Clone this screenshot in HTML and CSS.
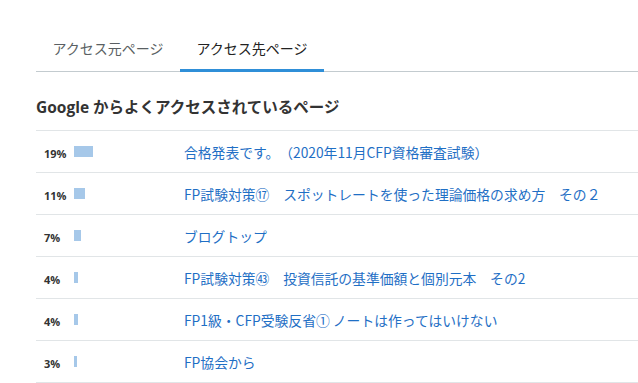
FILE: index.html
```html
<!DOCTYPE html>
<html lang="ja">
<head>
<meta charset="utf-8">
<link rel="stylesheet" href="styles.css">
</head>
<body>
<div class="page">
  <div class="tabs">
    <div class="tab">アクセス元ページ</div>
    <div class="tab active">アクセス先ページ</div>
  </div>
  <h2 class="heading">Google からよくアクセスされているページ</h2>
  <ul class="rows">
    <li class="row"><span class="pct">19%</span><span class="barcell"><span class="bar" style="width:19px"></span></span><a class="link">合格発表です。（2020年11月CFP資格審査試験）</a></li>
    <li class="row"><span class="pct">11%</span><span class="barcell"><span class="bar" style="width:11px"></span></span><a class="link">FP試験対策⑰　スポットレートを使った理論価格の求め方　その２</a></li>
    <li class="row"><span class="pct">7%</span><span class="barcell"><span class="bar" style="width:7px"></span></span><a class="link">ブログトップ</a></li>
    <li class="row"><span class="pct">4%</span><span class="barcell"><span class="bar" style="width:4px"></span></span><a class="link">FP試験対策㊸　投資信託の基準価額と個別元本　その2</a></li>
    <li class="row"><span class="pct">4%</span><span class="barcell"><span class="bar" style="width:4px"></span></span><a class="link">FP1級・CFP受験反省① ノートは作ってはいけない</a></li>
    <li class="row"><span class="pct">3%</span><span class="barcell"><span class="bar" style="width:3px"></span></span><a class="link">FP協会から</a></li>
  </ul>
</div>
</body>
</html>
```
FILE: styles.css
```css
* { box-sizing: border-box; }
html, body { margin: 0; padding: 0; background: #fff; }
body {
  font-family: "Open Sans", "Noto Sans CJK JP", sans-serif;
  color: #333;
  overflow: hidden;
}
.page {
  padding: 24px 0 0 36px;
  width: 638px;
}
.tabs {
  display: flex;
  border-bottom: 1px solid #c3cbcf;
}
.tab {
  width: 144px;
  text-align: center;
  font-family: "Noto Sans CJK JP", sans-serif;
  font-size: 14px;
  line-height: 20px;
  padding: 14px 0 11px;
  border-bottom: 3px solid transparent;
  margin-bottom: -1px;
  color: #5a5f63;
}
.tab.active {
  color: #222;
  border-bottom-color: #2f8fd8;
}
.heading {
  margin: 24px 0 12px;
  font-size: 15.5px;
  line-height: 22px;
  font-weight: 700;
  color: #333;
}
.rows {
  list-style: none;
  margin: 0;
  padding: 0;
  border-top: 1px solid #e1e5e7;
}
.row {
  display: flex;
  align-items: center;
  height: 42px;
  border-bottom: 1px solid #e1e5e7;
}
.pct {
  width: 38px;
  padding-left: 8px;
  padding-top: 3px;
  font-size: 11px;
  font-weight: 700;
  color: #333;
}
.barcell {
  width: 110px;
  display: flex;
  align-items: center;
}
.bar {
  display: block;
  height: 11px;
  background: #a6c8e9;
}
.link {
  font-family: "Noto Sans CJK JP", sans-serif;
  font-size: 13.8px;
  line-height: 20px;
  color: #1f6fc5;
  white-space: nowrap;
  text-spacing-trim: space-all;
}
```
